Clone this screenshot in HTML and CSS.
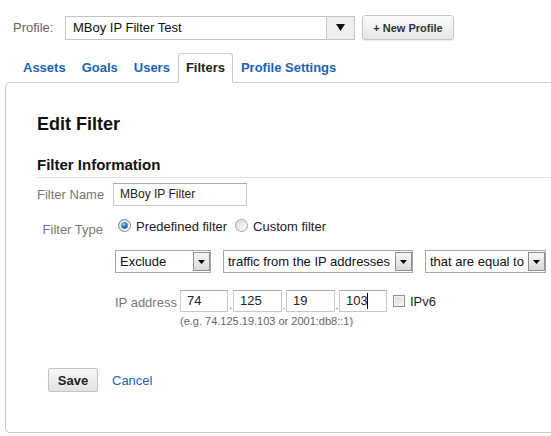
FILE: index.html
```html
<!DOCTYPE html>
<html>
<head>
<meta charset="utf-8">
<link rel="stylesheet" href="styles.css">
</head>
<body>
<div class="top">
  <span class="plabel">Profile:</span>
  <div class="psel">
    <span class="pval">MBoy IP Filter Test</span>
    <span class="parrow"><svg width="9" height="7" viewBox="0 0 9 7"><polygon points="0,0 9,0 4.5,7" fill="#111"/></svg></span>
  </div>
  <button class="newbtn">+ New Profile</button>
</div>

<div class="tabs">
  <span class="tab">Assets</span>
  <span class="tab">Goals</span>
  <span class="tab">Users</span>
  <span class="tab active">Filters</span>
  <span class="tab">Profile Settings</span>
</div>

<div class="panel">
  <h1 class="title">Edit Filter</h1>
  <h2 class="section">Filter Information</h2>

  <div class="row r-name">
    <span class="lbl">Filter Name</span>
    <div class="field name">MBoy IP Filter</div>
  </div>

  <div class="row r-type">
    <span class="lbl lbl-type">Filter Type</span>
    <div class="radios">
      <span class="opt first">
        <svg class="radio" width="13" height="13" viewBox="0 0 13 13">
          <defs>
            <linearGradient id="rg1" x1="0" y1="0" x2="1" y2="1"><stop offset="0" stop-color="#d4d4d4"/><stop offset="1" stop-color="#fdfdfd"/></linearGradient>
            <radialGradient id="dot" cx="0.4" cy="0.35" r="0.75"><stop offset="0" stop-color="#9ad8ff"/><stop offset="0.45" stop-color="#2b86cf"/><stop offset="1" stop-color="#0b3c6e"/></radialGradient>
          </defs>
          <circle cx="6.5" cy="6.5" r="6" fill="url(#rg1)" stroke="#7f8386"/>
          <circle cx="6.5" cy="6.5" r="3.2" fill="url(#dot)"/>
        </svg>
        Predefined filter
      </span>
      <span class="opt second">
        <svg class="radio" width="13" height="13" viewBox="0 0 13 13">
          <defs>
            <linearGradient id="rg2" x1="0" y1="0" x2="1" y2="1"><stop offset="0" stop-color="#d9d9d9"/><stop offset="1" stop-color="#fdfdfd"/></linearGradient>
          </defs>
          <circle cx="6.5" cy="6.5" r="6" fill="url(#rg2)" stroke="#a0a3a6"/>
        </svg>
        Custom filter
      </span>
    </div>
  </div>

  <div class="row r-sel">
    <span class="lbl"></span>
    <div class="selects">
      <div class="sel s1"><span class="sval">Exclude</span><span class="sarrow"><svg width="7" height="4" viewBox="0 0 7 4"><polygon points="0,0 7,0 3.5,4" fill="#000"/></svg></span></div>
      <div class="sel s2"><span class="sval">traffic from the IP addresses</span><span class="sarrow"><svg width="7" height="4" viewBox="0 0 7 4"><polygon points="0,0 7,0 3.5,4" fill="#000"/></svg></span></div>
      <div class="sel s3"><span class="sval">that are equal to</span><span class="sarrow"><svg width="7" height="4" viewBox="0 0 7 4"><polygon points="0,0 7,0 3.5,4" fill="#000"/></svg></span></div>
    </div>
  </div>

  <div class="row r-ip">
    <span class="lbl"></span>
    <div class="ipwrap">
      <div class="iprow">
        <span class="iplabel">IP address</span>
        <div class="field ip w48">74</div><span class="dot">.</span>
        <div class="field ip w49">125</div><span class="dot d4">.</span>
        <div class="field ip w49">19</div><span class="dot d4">.</span>
        <div class="field ip w48">103<span class="caret"></span></div>
        <span class="check"></span>
        <span class="ipv6">IPv6</span>
      </div>
      <div class="hint">(e.g. 74.125.19.103 or 2001:db8::1)</div>
    </div>
  </div>

  <div class="actions">
    <button class="save">Save</button>
    <span class="cancel">Cancel</span>
  </div>
</div>
</body>
</html>
```
FILE: styles.css
```css
* { box-sizing: border-box; }

body {
  margin: 0;
  font-family: "Liberation Sans", Arial, sans-serif;
  font-size: 13px;
  color: #222;
  background: #fff;
  overflow: hidden;
}

/* header */
.top {
  display: flex;
  align-items: center;
  height: 40px;
  padding: 15px 0 0 13px;
}
.plabel { width: 52px; color: #666; }
.psel {
  display: flex;
  width: 290px;
  height: 24px;
  border: 1px solid #c4c4c4;
  background: #fff;
}
.pval { flex: 1; padding-left: 7px; line-height: 22px; color: #111; }
.parrow {
  width: 28px;
  background: #efefef;
  border-left: 1px solid #c4c4c4;
  display: flex;
  align-items: center;
  justify-content: center;
}
.newbtn {
  margin-left: 7px;
  width: 92px;
  height: 25px;
  border: 1px solid #c8c8c8;
  border-radius: 3px;
  background: linear-gradient(#fbfbfb, #e6e6e6);
  box-shadow: 0 1px 1px rgba(0,0,0,0.08);
  font: bold 11px "Liberation Sans", Arial, sans-serif;
  color: #333;
  padding: 0;
}

/* tabs */
.tabs {
  display: flex;
  margin-top: 13px;
  margin-bottom: -1px;
  padding-left: 15px;
  position: relative;
  z-index: 1;
}
.tab {
  padding: 0 7px;
  line-height: 28px;
  border: 1px solid transparent;
  border-radius: 3px 3px 0 0;
  font-weight: bold;
  color: #1c63b3;
}
.tab.active {
  color: #222;
  background: #fff;
  border-color: #cbcbcb;
  border-bottom-color: #fff;
}

.panel {
  margin-left: 5px;
  height: 351px;
  border: 1px solid #cbcbcb;
  border-right: 0;
  border-radius: 5px 0 0 5px;
  padding: 30px 0 0 31px;
}
.title {
  margin: 0;
  font-size: 18px;
  line-height: 22px;
  font-weight: bold;
  color: #111;
}
.section {
  margin: 21px 0 0;
  font-size: 15px;
  line-height: 18px;
  font-weight: bold;
  color: #111;
  padding-bottom: 3px;
  border-bottom: 1px solid #e2e2e2;
}

.row { display: flex; align-items: center; }
.lbl {
  flex: none;
  width: 66px;
  margin-right: 10px;
  text-align: right;
  white-space: nowrap;
  color: #777;
}

.field {
  height: 23px;
  border: 1px solid #c9c9c9;
  border-top-color: #a9a9a9;
  background: #fff;
  padding-left: 6px;
  line-height: 21px;
  color: #222;
  white-space: nowrap;
}
.r-name { margin-top: 5px; }
.field.name { width: 134px; font-size: 12px; }

.r-type { margin-top: 13px; align-items: flex-start; }
.lbl-type { padding-top: 3px; line-height: 16px; }
.radios { display: flex; line-height: 16px; color: #222; }
.opt { display: flex; align-items: center; white-space: nowrap; }
.opt.first { margin-left: 5px; }
.opt.second { margin-left: 8px; }
.radio { margin-right: 5px; position: relative; top: -2px; }

.r-sel { margin-top: 12px; }
.selects { display: flex; margin-left: 2px; }
.sel {
  display: flex;
  height: 23px;
  border: 1px solid #a7a7a7;
  background: #fff;
}
.s1 { width: 96px; }
.s2 { width: 190px; margin-left: 12px; }
.s3 { width: 121px; margin-left: 12px; }
.sval { flex: 1; padding-left: 4px; line-height: 21px; white-space: nowrap; overflow: hidden; color: #111; }
.sarrow {
  flex: none;
  width: 17px;
  margin: 1px 0;
  border: 1px solid #8e8e8e;
  background: linear-gradient(#f6f6f6, #d9d9d9);
  display: flex;
  align-items: center;
  justify-content: center;
}

.r-ip { margin-top: 17px; align-items: flex-start; }
.ipwrap { margin-left: 2px; }
.iprow { display: flex; align-items: flex-end; }
.iplabel { width: 65px; color: #777; line-height: 16px; padding-bottom: 1px; }
.field.ip { height: 22px; line-height: 20px; position: relative; }
.w48 { width: 48px; }
.w49 { width: 49px; }
.dot { width: 5px; text-align: center; line-height: 14px; color: #555; font-size: 11px; }
.dot.d4 { width: 4px; }
.caret {
  position: absolute;
  left: 27px;
  top: 2px;
  width: 1px;
  height: 16px;
  background: #000;
}
.check {
  align-self: center;
  width: 12px;
  height: 12px;
  margin-left: 6px;
  border: 1px solid #8f8f8f;
  background: linear-gradient(135deg, #d6d6d6, #f8f8f8);
  box-shadow: inset 0 0 0 1px #f4f4f4;
}
.ipv6 { align-self: center; margin-left: 5px; color: #222; }
.hint {
  margin-top: 3px;
  padding-left: 65px;
  font-size: 11px;
  line-height: 13px;
  color: #666;
}

.actions {
  display: flex;
  align-items: center;
  margin-top: 40px;
  margin-left: 11px;
}
.save {
  width: 50px;
  height: 24px;
  padding: 0;
  border: 1px solid #c4c4c4;
  border-radius: 2px;
  background: linear-gradient(#f8f8f8, #e2e2e2);
  font: bold 13px "Liberation Sans", Arial, sans-serif;
  color: #222;
}
.cancel { margin-left: 14px; color: #1c63b3; }
```
